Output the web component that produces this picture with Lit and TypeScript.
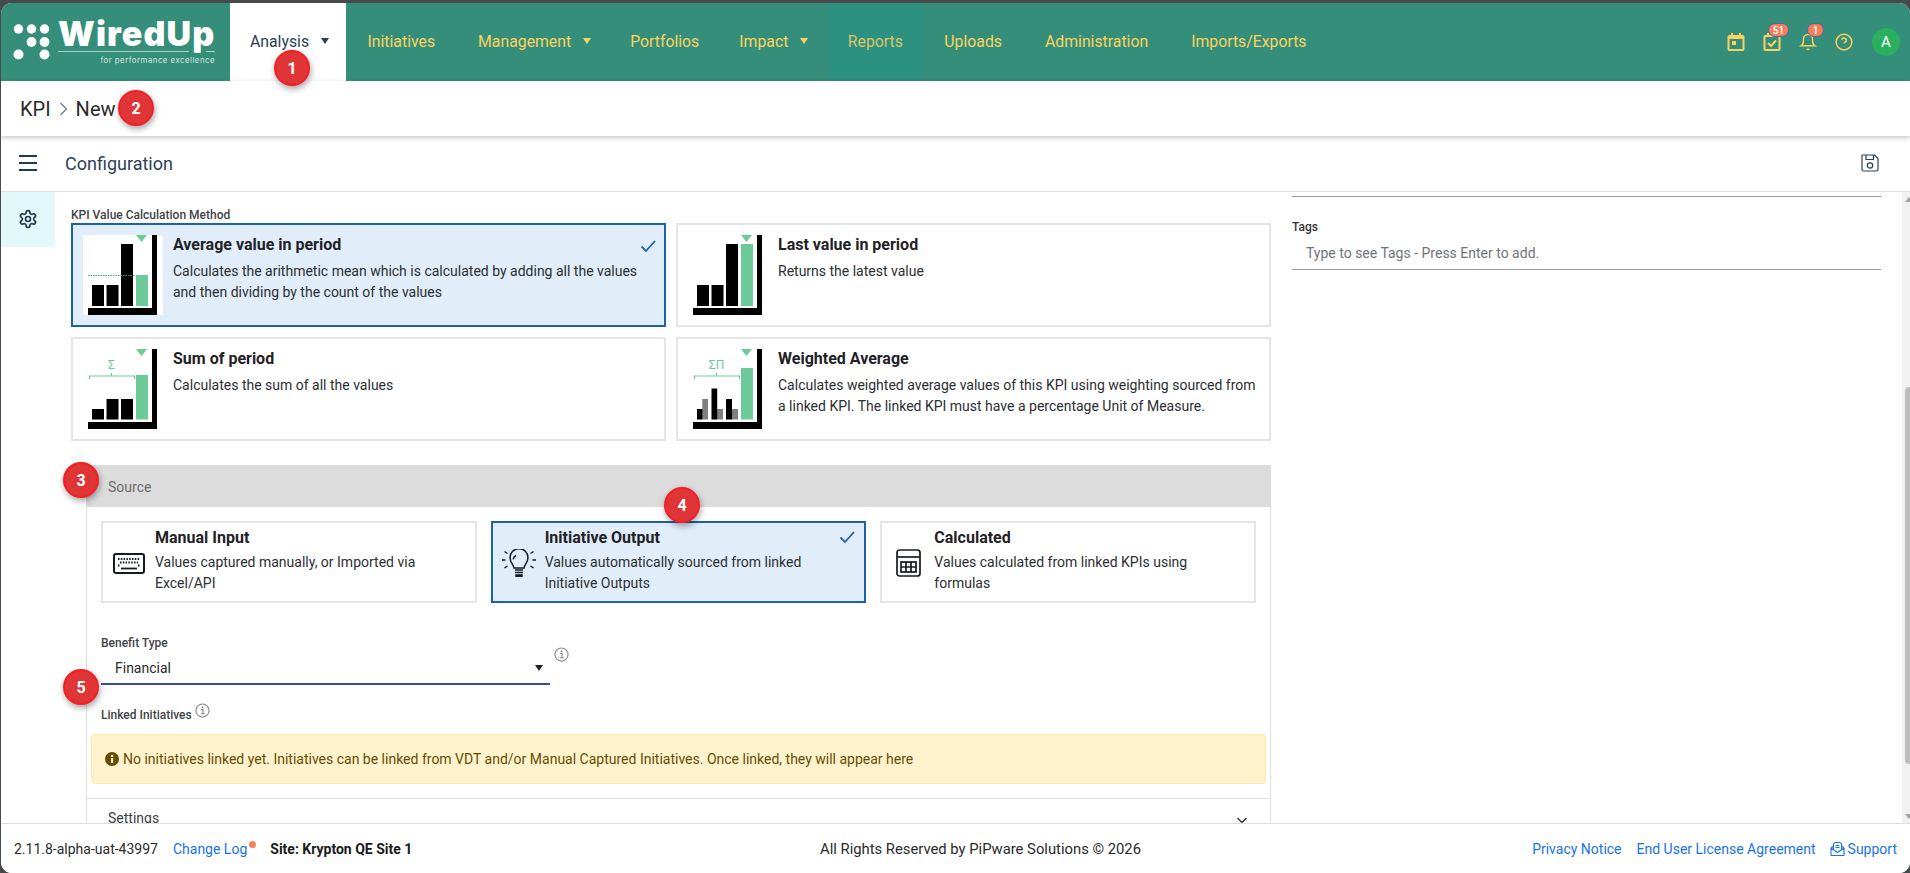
import { LitElement, html, css, svg } from "lit";
import { customElement } from "lit/decorators.js";

const G = "#6ccb98";

function axis() {
  return svg`<rect x="69" y="0" width="5" height="80" fill="#000"/><rect x="5" y="73" width="69" height="7" fill="#000"/><path d="M53 0h11l-5.500 7z" fill="${G}"/>`;
}
function bracket(label: string) {
  return svg`<path d="M6.500 30v-3h45v3M28.500 27v-3" fill="none" stroke="${G}" stroke-width="1.200"/><text x="28.500" y="20" text-anchor="middle" font-family="Roboto, sans-serif" font-size="12" fill="${G}">${label}</text>`;
}
const thumbs: Record<string, unknown> = {
  avg: svg`${axis()}<rect x="9" y="50" width="12" height="21"/><rect x="23.500" y="50" width="12" height="21"/><rect x="38" y="9" width="12" height="62"/><rect x="53" y="40" width="12" height="31" fill="${G}"/><path d="M5 40.500h47" stroke="#3fae76" stroke-width="1.200" stroke-dasharray="1.500 1"/>`,
  last: svg`${axis()}<rect x="9" y="50" width="12" height="21"/><rect x="23.500" y="50" width="12" height="21"/><rect x="38" y="9" width="12" height="62"/><rect x="53" y="9" width="12" height="62" fill="${G}"/>`,
  sum: svg`${axis()}${bracket("Σ")}<rect x="9" y="60" width="12" height="10.500"/><rect x="23.500" y="50" width="12" height="20.500"/><rect x="38" y="50" width="12" height="20.500"/><rect x="53" y="26" width="12" height="44.500" fill="${G}"/>`,
  weighted: svg`${axis()}${bracket("ΣΠ")}<rect x="14.300" y="50" width="5.700" height="20.500" fill="#808080"/><rect x="9" y="60" width="5.500" height="10.500"/><rect x="29" y="60" width="6" height="10.500" fill="#808080"/><rect x="23.500" y="39.500" width="5.700" height="31"/><rect x="44" y="60" width="6" height="10.500" fill="#808080"/><rect x="38" y="50" width="6" height="20.500"/><rect x="53" y="19" width="12" height="51.500" fill="${G}"/>`,
};

const methods = [
  { t: "Average value in period", d: "Calculates the arithmetic mean which is calculated by adding all the values and then dividing by the count of the values", k: "avg", on: true },
  { t: "Last value in period", d: "Returns the latest value", k: "last", on: false },
  { t: "Sum of period", d: "Calculates the sum of all the values", k: "sum", on: false },
  { t: "Weighted Average", d: "Calculates weighted average values of this KPI using weighting sourced from a linked KPI. The linked KPI must have a percentage Unit of Measure.", k: "weighted", on: false },
];

const check = html`<svg class="check" viewBox="0 0 16 16" fill="none" stroke="#1a63a8" stroke-width="1.800"><path d="M1.500 8.500l4.500 4.500 9-10"/></svg>`;

const keyboard = html`<svg width="32" height="21" viewBox="0 0 32 21" fill="none" stroke="#141b24"><rect x="1" y="1" width="30" height="19" rx="2" stroke-width="2"/><path d="M5 6h22M7 9.500h18M5 12.500h2M25 12.500h2" stroke-width="1.800" stroke-dasharray="1.500 1.300"/><path d="M8 15.500h16" stroke-width="1.800"/></svg>`;
const bulb = html`<svg width="34" height="28" viewBox="0 0 34 28" fill="none" stroke="#141b24" stroke-width="1.500"><path d="M12 22c0-3-4-5-4-10.500a9 8.800 0 0 1 18 0C26 17 22 19 22 22z" transform="translate(0 -3)"/><path d="M13 21h8M13 23.500h8M14 26h6l0 1.200h-6z"/><path d="M14 6.500c-1.500.8-2.500 2-2.800 3.800"/><path d="M0 11h3.500M30.500 11H34M2.500 2.500l3 2M31.500 2.500l-3 2M2.500 19l3-2M31.500 19l-3-2"/></svg>`;
const calc = html`<svg width="25" height="28" viewBox="0 0 25 28" fill="none" stroke="#141b24" stroke-width="1.700"><rect x="1" y="1" width="23" height="26" rx="2.500"/><path d="M1 8h23"/><rect x="5" y="13" width="15" height="10"/><path d="M10 13v10M15 13v10M5 18h15"/></svg>`;

const sources = [
  { t: "Manual Input", d: "Values captured manually, or Imported via Excel/API", i: keyboard, on: false },
  { t: "Initiative Output", d: "Values automatically sourced from linked Initiative Outputs", i: bulb, on: true },
  { t: "Calculated", d: "Values calculated from linked KPIs using formulas", i: calc, on: false },
];

const marks = [
  { n: 1, x: 274, y: 50 },
  { n: 2, x: 118, y: 90 },
  { n: 3, x: 63, y: 462 },
  { n: 4, x: 664, y: 487 },
  { n: 5, x: 63, y: 669 },
];

const info = html`<svg class="info" viewBox="0 0 16 16" fill="none" stroke="#8a8a8a"><circle cx="8" cy="8" r="7" stroke-width="1.200"/><path d="M6.500 7h2v4.500M6.300 11.500h4" stroke-width="1.200"/><circle cx="8" cy="4.700" r="1" fill="#8a8a8a" stroke="none"/></svg>`;

@customElement("app-root")
export class AppRoot extends LitElement {
  static styles = css`
    :host { display: block; position: relative; height: 100vh; box-sizing: border-box; padding: 2.500px 0 0 1px; background: #47494b; font-family: Roboto, "Liberation Sans", sans-serif; color: #212529; overflow: hidden; }
    .app { height: 100%; background: #fff; border-radius: 11px; overflow: hidden; display: flex; flex-direction: column; }
    .nav { flex: 0 0 78.500px; background: #358e7a; display: flex; align-items: stretch; color: #fad25f; font-size: 15.800px; }
    .logo { width: 229px; display: flex; gap: 7px; padding: 15px 0 0 12px; box-sizing: border-box; color: #fff; }
    .logo svg { width: 38px; height: 42px; margin-top: 3px; }
    .logo-text { width: 157px; display: flex; flex-direction: column; }
    .wordmark { font-family: Inter, sans-serif; font-weight: 900; font-size: 34px; height: 33px; line-height: 31px; letter-spacing: 1.100px; white-space: nowrap; }
    .rule { display: flex; justify-content: space-between; height: 1px; }
    .rule span { background: #a9d0c6; height: 1px; }
    .rule .long { width: 131px; }
    .rule .short { width: 9px; }
    .tagline { align-self: flex-end; font-family: Inter, sans-serif; font-size: 7.800px; line-height: 12px; letter-spacing: .5px; margin-top: 2.500px; color: #d4e8e2; white-space: nowrap; }
    .tab { display: flex; align-items: center; padding: 0 21.500px 1px; white-space: nowrap; }
    .tab.active { background: #fff; color: #2a3f54; padding: 0 17px 1px 20px; width: 116px; box-sizing: border-box; }
    .tab.dim { background: #2c9180; color: #dcc566; padding: 0 19px 1px; width: 94px; box-sizing: border-box; }
    .caret { width: 0; height: 0; border-left: 4px solid transparent; border-right: 4px solid transparent; border-top: 6px solid currentColor; margin-left: 12px; }
    .tab.mgmt { padding-right: 17.500px; }
    .tab.imp { margin-left: -3px; padding-right: 20.500px; }
    .spacer { flex: 1; }
    .tools { display: flex; align-items: center; }
    .tool { position: relative; width: 18px; height: 18px; display: block; margin-right: 18px; }
    .tool svg { width: 18px; height: 18px; display: block; fill: none; stroke: #fad25f; stroke-width: 2; }
    .badge { position: absolute; top: -10px; height: 14px; border-radius: 7px; background: #f47f5b; border: 1px solid #5d62a8; color: #fff; font-size: 10px; font-weight: 500; line-height: 13px; text-align: center; box-sizing: border-box; }
    .b51 { left: 5px; width: 21px; }
    .b1 { left: 8px; width: 17px; }
    .avatar { width: 28px; height: 28px; border-radius: 50%; background: #29b05f; color: #fff; font-size: 15px; display: flex; align-items: center; justify-content: center; margin: 0 10px 0 1px; }
    .crumb { flex: 0 0 55px; display: flex; align-items: center; gap: 8px; padding: 0 0 0 19px; font-size: 20px; color: #2b2b2b; box-shadow: 0 2px 5px rgba(0,0,0,.22); position: relative; z-index: 1; }
    .crumb svg { width: 9px; height: 14px; }
    .head { flex: 0 0 55px; display: flex; align-items: center; border-bottom: 1px solid #dfdfdf; padding: 0 31px 0 18px; color: #2e4256; font-size: 18px; }
    .head .burger { width: 18px; height: 16px; margin: 0 28px 1px 0; }
    .head .save { width: 18px; height: 18px; margin: 0 0 2px auto; }
    .work { flex: 1; min-height: 0; display: flex; }
    .side { flex: 0 0 54px; }
    .side-item { height: 53px; padding-bottom: 2px; background: #e2f8fb; display: flex; align-items: center; justify-content: center; }
    .side-item svg { width: 20px; height: 20px; }
    .scroll { flex: 1; min-width: 0; display: flex; gap: 21px; padding: 0 0 0 16px; overflow: hidden; }
    .left { flex: 0 0 1200px; padding-top: 14.500px; }
    .right { flex: 0 0 589px; padding-top: 4px; }
    .lab { font-size: 12px; font-weight: 500; line-height: 16px; color: #3f4347; white-space: nowrap; }
    .grid { display: grid; grid-template-columns: 595px 595px; gap: 10px; margin-top: .500px; }
    .card { box-sizing: border-box; height: 104px; border: 2px solid #e2e6e6; padding: 10px; display: flex; gap: 10px; position: relative; }
    .card.on, .scard.on { border-color: #1a63a8; background: #e1edf9; }
    .thumb { width: 80px; height: 80px; background: #fff; flex: none; display: block; }
    .card:not(.on) .thumb { background: transparent; }
    .t { font-size: 16px; font-weight: 700; line-height: 18px; color: #1f2226; padding-top: 1px; }
    .d { font-size: 14px; line-height: 21px; color: #2b2f33; margin-top: 6.500px; }
    .check { position: absolute; width: 16px; height: 16px; right: 8px; top: 13px; }
    .panel { margin: 24px 0 0 15px; }
    .phead { height: 41px; padding: 1px 0 0 22px; background: #dcdcdc; display: flex; align-items: center; font-size: 14px; color: #6b6b6b; }
    .pbody { border: 1px solid #dfe0e0; border-width: 0 1px; padding: 14px 14px 0; }
    .sgrid { display: grid; grid-template-columns: repeat(3, 1fr); gap: 14px; }
    .scard { box-sizing: border-box; height: 82px; border: 2px solid #e2e6e6; position: relative; display: flex; padding: 2px 0 0 0; }
    .sicon { flex: 0 0 52px; display: flex; align-items: center; justify-content: center; }
    .stext { flex: 1; padding: 2px 14px 0 0; }
    .scard .t { line-height: 20px; }
    .scard .d { margin-top: 4px; line-height: 20.500px; }
    .scard .check { right: 9px; top: 6px; }
    .benefit { margin-top: 32px; display: flex; align-items: flex-start; }
    .benefit-main { width: 449px; }
    .sel { display: flex; align-items: center; height: 33px; margin-top: 1px; padding: 0 7px 0 14px; box-sizing: border-box; border-bottom: 2px solid #3949ab; font-size: 14px; color: #2b2b2b; justify-content: space-between; }
    .sel .caret { border-top-color: #222; margin: 0; }
    .info { width: 15px; height: 15px; display: block; }
    .benefit > .info { margin: 12px 0 0 4px; }
    .linked { display: flex; align-items: flex-start; margin-top: 16px; gap: 3px; }
    .linked .lab { margin-top: 6px; }
    .linked .info { margin-top: 2px; }
    .alert { margin: 11px -10px 0 -10px; height: 50px; box-sizing: border-box; border: 1px solid #ffe9a8; border-radius: 4px; background: #fff3cd; color: #664d03; font-size: 14px; display: flex; align-items: center; gap: 4px; padding-left: 13px; white-space: nowrap; }
    .alert svg { width: 14px; height: 14px; flex: none; }
    .settings { margin: 14px -14px 0; border-top: 1px solid #dfe0e0; height: 40px; display: flex; align-items: flex-start; padding: 11px 22px 0 21px; font-size: 14px; color: #3c3f42; justify-content: space-between; }
    .settings svg { width: 12px; height: 12px; margin-top: 4px; }
    .line { height: 1px; background: #9a9a9a; }
    .tags { margin-top: 22px; font-size: 12px; font-weight: 500; line-height: 16px; color: #333; }
    .ph { font-size: 14px; line-height: 20px; color: #6f747a; padding: 8px 0 6px 14px; }
    .bar { flex: 0 0 13px; background: #f1f1f1; position: relative; display: flex; flex-direction: column; align-items: center; }
    .arr { width: 0; height: 0; border-left: 4px solid transparent; border-right: 4px solid transparent; }
    .arr.up { border-bottom: 5px solid #a3a3a3; margin-top: 5px; }
    .arr.down { border-top: 5px solid #a3a3a3; margin-top: auto; margin-bottom: 4px; }
    .thumbbar { width: 8px; height: 377px; background: #bdbdbd; border-radius: 4px; margin-top: 185px; }
    .footer { flex: 0 0 50px; box-sizing: border-box; border-top: 1px solid #dedede; background: #fff; display: grid; grid-template-columns: 1fr auto 1fr; align-items: center; padding: 1px 13px 0; font-size: 14px; color: #2b2b2b; position: relative; z-index: 1; }
    .fl, .fr { display: flex; align-items: center; white-space: nowrap; }
    .fr { justify-content: flex-end; gap: 15px; }
    .fc { font-size: 14.800px; margin-left: 50px; white-space: nowrap; }
    .link { color: #1a73e8; }
    .logwrap { position: relative; margin: 0 23px 0 15px; }
    .dot { position: absolute; right: -9px; top: 0px; width: 7px; height: 7px; border-radius: 50%; background: #f47f5b; }
    .site { font-weight: 700; color: #1a1a1a; }
    .sup { display: flex; align-items: center; gap: 3px; margin-left: -1px; }
    .sup svg { width: 15px; height: 16px; }
    .mark { position: absolute; box-sizing: border-box; width: 36px; height: 36px; border-radius: 50%; background: #e03537; border: 2px solid #f41f24; color: #fff; font-weight: 700; font-size: 16px; display: flex; align-items: center; justify-content: center; box-shadow: 1px 3px 6px rgba(0,0,0,.35); z-index: 5; }
  `;

  render() {
    return html`
      <div class="app">
        <header class="nav">
          <div class="logo">
            <svg viewBox="0 0 38 42" fill="#fff"><circle cx="5.500" cy="8" r="4.700"/><circle cx="18.500" cy="8" r="4.700"/><circle cx="31.500" cy="8" r="4.700"/><circle cx="18.500" cy="21" r="4.900"/><circle cx="31.500" cy="21" r="4.900"/><circle cx="5.500" cy="33.500" r="5"/><circle cx="31.500" cy="33.500" r="5"/></svg>
            <div class="logo-text">
              <div class="wordmark">WiredUp</div>
              <div class="rule"><span class="long"></span><span class="short"></span></div>
              <div class="tagline">for performance excellence</div>
            </div>
          </div>
          <div class="tab active">Analysis<span class="caret"></span></div>
          <div class="tab">Initiatives</div>
          <div class="tab mgmt">Management<span class="caret"></span></div>
          <div class="tab">Portfolios</div>
          <div class="tab imp">Impact<span class="caret"></span></div>
          <div class="tab dim">Reports</div>
          <div class="tab">Uploads</div>
          <div class="tab">Administration</div>
          <div class="tab">Imports/Exports</div>
          <div class="spacer"></div>
          <div class="tools">
            <span class="tool"><svg viewBox="0 0 18 18"><rect x="1.500" y="3" width="15" height="14" rx="1"/><path d="M5 0v3M13 0v3M1.500 5h15" /><rect x="5" y="8" width="4" height="4" fill="#fad25f" stroke="none"/></svg></span>
            <span class="tool"><svg viewBox="0 0 18 18"><rect x="1.500" y="3" width="15" height="14" rx="1"/><path d="M5 0v3M13 0v3"/><path d="M5 10l3 3 5-5.500"/></svg><span class="badge b51">51</span></span>
            <span class="tool"><svg viewBox="0 0 24 24" stroke-width="2.400"><path d="M6 8a6 6 0 0 1 12 0c0 7 3 9 3 9H3s3-2 3-9"/><path d="M10.300 21a1.940 1.940 0 0 0 3.400 0"/></svg><span class="badge b1">1</span></span>
            <span class="tool"><svg viewBox="0 0 24 24" stroke-width="2.400"><circle cx="12" cy="12" r="10.500"/><path d="M8.800 9a3.200 3.200 0 0 1 6.300 1c0 2-3.100 2.800-3.100 3.800"/><path d="M12 17.200v.3"/></svg></span>
            <span class="avatar">A</span>
          </div>
        </header>
        <div class="crumb"><span>KPI</span><svg viewBox="0 0 9 14" fill="none" stroke="#6b7280" stroke-width="1.200"><path d="M1.500 1l6 6-6 6"/></svg><span>New</span></div>
        <div class="head">
          <svg class="burger" viewBox="0 0 18 16" stroke="#1f3a56" stroke-width="2"><path d="M0 1h18M0 8h18M0 15h18"/></svg>
          <span>Configuration</span>
          <svg class="save" viewBox="0 0 18 18" fill="none" stroke="#2e4256" stroke-width="1.200"><path d="M1.500 1h12l3.500 3.500v11a1.500 1.500 0 0 1-1.500 1.500h-13A1.500 1.500 0 0 1 1 15.500V1.500z"/><path d="M5 1v4.500h7.500V1"/><circle cx="9" cy="11.500" r="2.700"/></svg>
        </div>
        <div class="work">
          <nav class="side"><div class="side-item"><svg viewBox="0 0 24 24" fill="none" stroke="#23364a" stroke-width="2"><path d="M12.220 2h-.44a2 2 0 0 0-2 2v.18a2 2 0 0 1-1 1.730l-.43.25a2 2 0 0 1-2 0l-.15-.08a2 2 0 0 0-2.730.73l-.22.38a2 2 0 0 0 .73 2.730l.15.1a2 2 0 0 1 1 1.720v.51a2 2 0 0 1-1 1.740l-.15.09a2 2 0 0 0-.73 2.730l.22.38a2 2 0 0 0 2.730.73l.15-.08a2 2 0 0 1 2 0l.43.25a2 2 0 0 1 1 1.730V20a2 2 0 0 0 2 2h.44a2 2 0 0 0 2-2v-.18a2 2 0 0 1 1-1.730l.43-.25a2 2 0 0 1 2 0l.15.08a2 2 0 0 0 2.730-.73l.22-.39a2 2 0 0 0-.73-2.730l-.15-.08a2 2 0 0 1-1-1.740v-.5a2 2 0 0 1 1-1.740l.15-.09a2 2 0 0 0 .73-2.730l-.22-.38a2 2 0 0 0-2.730-.73l-.15.08a2 2 0 0 1-2 0l-.43-.25a2 2 0 0 1-1-1.730V4a2 2 0 0 0-2-2z"/><circle cx="12" cy="12" r="3"/></svg></div></nav>
          <main class="scroll">
            <section class="left">
              <div class="lab">KPI Value Calculation Method</div>
              <div class="grid">
                ${methods.map((m) => html`
                  <div class="card ${m.on ? "on" : ""}">
                    <svg class="thumb" viewBox="0 0 80 80">${thumbs[m.k]}</svg>
                    <div><div class="t">${m.t}</div><div class="d">${m.d}</div></div>
                    ${m.on ? check : ""}
                  </div>`)}
              </div>
              <div class="panel">
                <div class="phead">Source</div>
                <div class="pbody">
                  <div class="sgrid">
                    ${sources.map((s) => html`
                      <div class="scard ${s.on ? "on" : ""}">
                        <div class="sicon">${s.i}</div>
                        <div class="stext"><div class="t">${s.t}</div><div class="d">${s.d}</div></div>
                        ${s.on ? check : ""}
                      </div>`)}
                  </div>
                  <div class="benefit">
                    <div class="benefit-main">
                      <div class="lab">Benefit Type</div>
                      <div class="sel"><span>Financial</span><span class="caret"></span></div>
                    </div>
                    ${info}
                  </div>
                  <div class="linked"><span class="lab">Linked Initiatives</span>${info}</div>
                  <div class="alert">
                    <svg viewBox="0 0 14 14"><circle cx="7" cy="7" r="7" fill="#664d03"/><rect x="6" y="6" width="2.200" height="5" fill="#fff3cd"/><circle cx="7.100" cy="3.900" r="1.200" fill="#fff3cd"/></svg>
                    <span>No initiatives linked yet. Initiatives can be linked from VDT and/or Manual Captured Initiatives. Once linked, they will appear here</span>
                  </div>
                  <div class="settings"><span>Settings</span><svg viewBox="0 0 12 12" fill="none" stroke="#333" stroke-width="1.400"><path d="M1.500 4l4.500 4.500L10.500 4"/></svg></div>
                </div>
              </div>
            </section>
            <aside class="right">
              <div class="line"></div>
              <div class="tags">Tags</div>
              <div class="ph">Type to see Tags - Press Enter to add.</div>
              <div class="line"></div>
            </aside>
            <div class="bar"><span class="arr up"></span><div class="thumbbar"></div><span class="arr down"></span></div>
          </main>
        </div>
        <footer class="footer">
          <div class="fl"><span>2.11.8-alpha-uat-43997</span><span class="logwrap link">Change Log<span class="dot"></span></span><span class="site">Site: Krypton QE Site 1</span></div>
          <div class="fc">All Rights Reserved by PiPware Solutions © 2026</div>
          <div class="fr"><span class="link">Privacy Notice</span><span class="link">End User License Agreement</span>
            <span class="link sup"><svg viewBox="0 0 15 16" fill="none" stroke="#1a73e8" stroke-width="1.100"><path d="M1 7v7.500h13V7M1 7l2.500-2M14 7l-2.500-2M1 7l6.500 4.500L14 7"/><path d="M3.500 8V3.500a2 2 0 0 1 2-2h4a2 2 0 0 1 2 2V8M5.500 4.500h4M5.500 6.500h4"/></svg>Support</span></div>
        </footer>
      </div>
      ${marks.map((m) => html`<div class="mark" style="left:${m.x}px;top:${m.y}px">${m.n}</div>`)}
    `;
  }
}
